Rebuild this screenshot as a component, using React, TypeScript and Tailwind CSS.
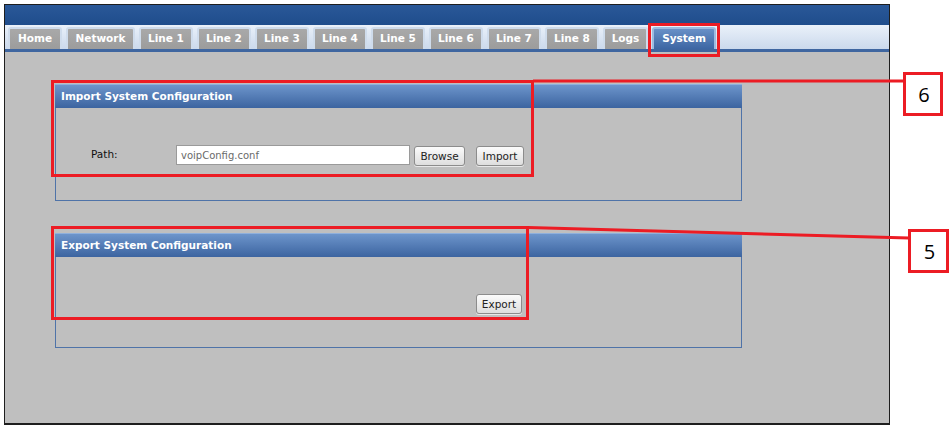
import React from "react";

const font = { fontFamily: '"DejaVu Sans", Verdana, sans-serif' };

const tabs = [
  { label: "Home", w: "w-[54px]" },
  { label: "Network", w: "w-[69px]" },
  { label: "Line 1", w: "w-[54px]" },
  { label: "Line 2", w: "w-[54px]" },
  { label: "Line 3", w: "w-[54px]" },
  { label: "Line 4", w: "w-[54px]" },
  { label: "Line 5", w: "w-[54px]" },
  { label: "Line 6", w: "w-[54px]" },
  { label: "Line 7", w: "w-[54px]" },
  { label: "Line 8", w: "w-[54px]" },
  { label: "Logs", w: "w-[45px]" },
  { label: "System", w: "w-[64px]", active: true },
];

const Btn = ({ children, w }: { children: React.ReactNode; w: string }) => (
  <button
    className={`${w} h-[20px] rounded-[3px] border border-[#8c8c8c] bg-gradient-to-b from-[#fbfbfb] to-[#dedede] text-[10.5px] leading-none text-[#222] shadow-[0_1px_0_#e8e8e8]`}
  >
    {children}
  </button>
);

const PanelHeader = ({ title }: { title: string }) => (
  <div className="h-[24px] flex items-center pl-[6px] bg-gradient-to-b from-[#6d95cb] to-[#3c64a0] border-t border-[#8fb0dc] text-white font-bold text-[10.5px]">
    {title}
  </div>
);

const Callout = ({ n, cls }: { n: string; cls: string }) => (
  <div
    className={`absolute ${cls} border-[3px] border-[#ec1c24] bg-white flex items-center justify-center pt-[2px] pl-[2px] text-[20px] leading-none text-black`}
    style={{ fontFamily: '"Open Sans", sans-serif' }}
  >
    {n}
  </div>
);

export default function App() {
  return (
    <div className="relative w-[949px] h-[430px] bg-white overflow-hidden" style={font}>
      {/* screenshot frame */}
      <div className="ml-[4px] mt-[4px] w-[886px] h-[421px] border border-[#1e1e1e] border-b-2 flex flex-col">
        <div className="h-[20px] bg-gradient-to-b from-[#2a5898] to-[#1f4d8c]" />
        <div className="h-[24px] flex items-end gap-[4px] pl-[3px] bg-gradient-to-b from-[#eaf1fa] to-[#cbd9ec]">
          {tabs.map((t) => (
            <div
              key={t.label}
              className={`${t.w} h-[22px] flex items-center justify-center rounded-t-[3px] border-t-2 border-x-2 text-white font-bold text-[10.5px] ${
                t.active
                  ? "border-[#9dbbe0] bg-gradient-to-b from-[#6890c7] to-[#3d66a3]"
                  : "border-[#cfdcec] bg-gradient-to-b from-[#a9a9a9] to-[#9c9c9c]"
              }`}
            >
              {t.label}
            </div>
          ))}
        </div>
        <div className="h-[3px] bg-[#3f66a0]" />
        <div className="flex-1 bg-[#bfbfbf] pl-[50px] pt-[32px]">
          {/* import panel */}
          <div className="w-[687px]">
            <PanelHeader title="Import System Configuration" />
            <div className="h-[93px] border-x border-b border-[#4f73a8] pt-[35px]">
              <div className="flex items-center">
                <div className="w-[120px] pl-[35px] text-[10.5px] text-[#111]">Path:</div>
                <div className="w-[234px] h-[20px] bg-white border border-[#9a9a9a] flex items-center pl-[4px] text-[10px] text-[#6a6a6a]">
                  voipConfig.conf
                </div>
                <div className="ml-[4px]">
                  <Btn w="w-[51px]">Browse</Btn>
                </div>
                <div className="ml-[11px]">
                  <Btn w="w-[48px]">Import</Btn>
                </div>
              </div>
            </div>
          </div>
          {/* export panel */}
          <div className="w-[687px] mt-[32px]">
            <PanelHeader title="Export System Configuration" />
            <div className="h-[91px] border-x border-b border-[#4f73a8] pt-[34px] pl-[420px]">
              <Btn w="w-[46px]">Export</Btn>
            </div>
          </div>
        </div>
      </div>

      {/* annotations */}
      <div className="absolute left-[648px] top-[23px] w-[72px] h-[34px] border-[3px] border-[#ec1c24]" />
      <div className="absolute left-[51px] top-[80px] w-[483px] h-[97px] border-[3px] border-[#ec1c24]" />
      <div className="absolute left-[51px] top-[226px] w-[478px] h-[94px] border-[3px] border-[#ec1c24]" />
      <svg className="absolute left-0 top-0" width="949" height="430">
        <line x1="533" y1="81" x2="904" y2="81" stroke="#ec1c24" strokeWidth="3" />
        <line x1="528" y1="227.5" x2="909" y2="238" stroke="#ec1c24" strokeWidth="3" />
      </svg>
      <Callout n="6" cls="left-[903px] top-[72px] w-[40px] h-[44px]" />
      <Callout n="5" cls="left-[908px] top-[229px] w-[41px] h-[44px]" />
    </div>
  );
}
